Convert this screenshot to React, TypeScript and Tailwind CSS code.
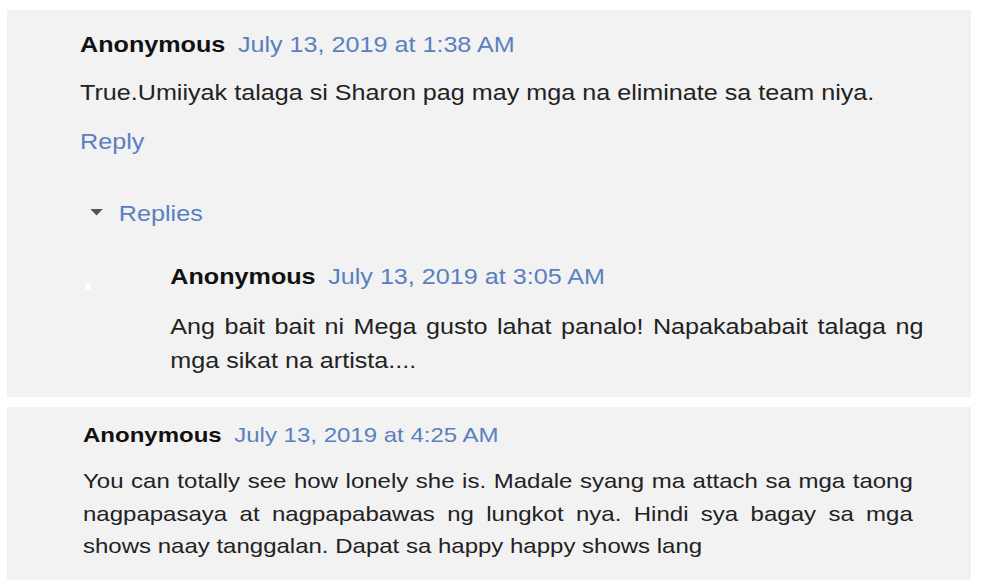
export default function App() {
    const blue = "text-[#5b80bf]";
    // the screenshot is stretched sideways, so text blocks are scaled on x
    const stretch = "origin-top-left scale-x-[1.143]";
    return (
        <div className="w-[1000px] h-[588px] bg-white pt-[10px] pl-[7px] font-['Liberation_Sans',Arial,sans-serif] text-[#222]">
            <div className="relative w-[964px] h-[387px] bg-[#f2f2f2] pl-[73px] pt-[20px]">
                <span className="absolute left-[78px] top-[274px] w-[6px] h-[6px] rounded-full bg-white" />
                <div className={`w-[738px] ${stretch}`}>
                    <div className="flex items-center h-[30px] text-[22px] leading-[30px]">
                        <span className="font-bold text-[#111]">Anonymous</span>
                        <span className={`${blue} ml-[11px]`}>July 13, 2019 at 1:38 AM</span>
                    </div>
                    <p className="mt-[18px] text-[22px] leading-[30px]">
                        True.Umiiyak talaga si Sharon pag may mga na eliminate sa team niya.
                    </p>
                    <div className={`mt-[19px] text-[22px] leading-[30px] ${blue}`}>Reply</div>
                    <div className="mt-[42px] flex items-center h-[30px] ml-[9px]">
                        <svg width="11" height="7" viewBox="0 0 11 7" className="mb-[3px]">
                            <polygon points="0,0 11,0 5.5,6.5" fill="#555" />
                        </svg>
                        <span className={`ml-[14px] text-[22px] leading-[30px] ${blue}`}>Replies</span>
                    </div>
                    <div className="mt-[33px] pl-[79px]">
                        <div className="flex items-center h-[30px] text-[22px] leading-[30px]">
                            <span className="font-bold text-[#111]">Anonymous</span>
                            <span className={`${blue} ml-[11px]`}>July 13, 2019 at 3:05 AM</span>
                        </div>
                        <p className="mt-[18px] text-[22px] leading-[34px] text-justify">
                            Ang bait bait ni Mega gusto lahat panalo! Napakababait talaga ng mga sikat na artista....
                        </p>
                    </div>
                </div>
            </div>
            <div className="w-[964px] h-[173px] mt-[10px] bg-[#f2f2f2] pl-[76px] pt-[13px]">
                <div className={`w-[726px] ${stretch}`}>
                    <div className="flex items-center h-[30px] text-[21px] leading-[30px]">
                        <span className="font-bold text-[#111]">Anonymous</span>
                        <span className={`${blue} ml-[11px]`}>July 13, 2019 at 4:25 AM</span>
                    </div>
                    <p className="mt-[15px] text-[21px] leading-[32.5px] text-justify">
                        You can totally see how lonely she is. Madale syang ma attach sa mga taong nagpapasaya at nagpapabawas ng lungkot nya. Hindi sya bagay sa mga shows naay tanggalan. Dapat sa happy happy shows lang
                    </p>
                </div>
            </div>
        </div>
    );
}
